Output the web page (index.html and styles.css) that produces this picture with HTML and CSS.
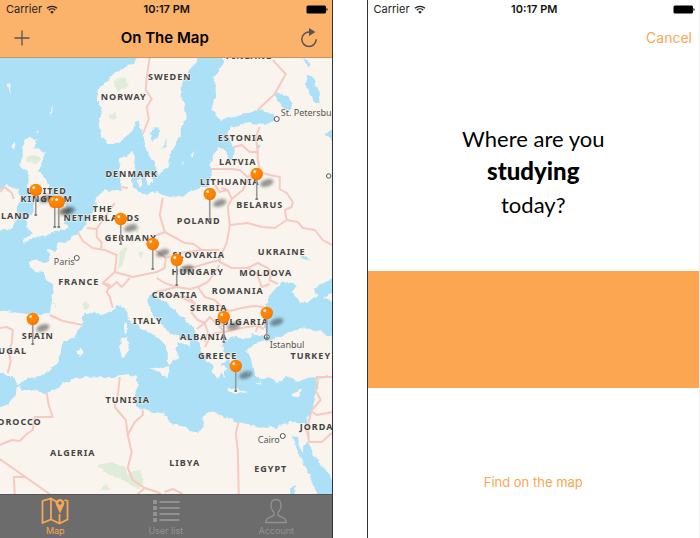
FILE: index.html
```html
<!DOCTYPE html>
<html lang="en">
<head>
<meta charset="utf-8">
<meta name="viewport" content="width=device-width, initial-scale=1">
<title>On The Map</title>
<link rel="stylesheet" href="styles.css">
</head>
<body>
<svg class="defs" aria-hidden="true">
  <symbol id="wifi" viewBox="0 0 12 9"><path d="M1 3.3a7.2 7.2 0 0 1 10 0M2.8 5.2a4.6 4.6 0 0 1 6.4 0" fill="none" stroke="currentColor" stroke-width="1.3"/><path d="M6 8.7 4.2 6.9a2.6 2.6 0 0 1 3.6 0z" fill="currentColor"/></symbol>
  <symbol id="battery" viewBox="0 0 22 9"><rect x=".5" y=".5" width="19.5" height="8" rx="1.5" fill="currentColor"/><path d="M20.5 3a1.6 1.6 0 0 1 0 3z" fill="currentColor"/></symbol>
</svg>
<div class="screens">
  <main class="phone phone-map">
    <header class="bar">
      <div class="status"><span class="carrier">Carrier <svg class="wifi"><use href="#wifi"/></svg></span><strong>10:17 PM</strong><svg class="battery"><use href="#battery"/></svg></div>
      <div class="title-row">
        <button class="icon-button" aria-label="Add location"><svg width="16" height="16" viewBox="0 0 16 16"><path d="M8 .5v15M.5 8h15" stroke="#555" stroke-width="1.3"/></svg></button>
        <h1>On The Map</h1>
        <button class="icon-button" aria-label="Refresh"><svg width="18" height="20" viewBox="0 0 18 20"><path d="M11.5 4.1H9A7.2 7.2 0 1 0 16.2 11.3" fill="none" stroke="#555" stroke-width="1.5"/><path d="M9 0 15.500 4.100 9 8z" fill="#555"/></svg></button>
      </div>
    </header>
    <svg class="map" viewBox="0 58 332 436" preserveAspectRatio="xMidYMid slice" role="img" aria-label="Map of Europe">
      <defs>
        <filter id="coast" x="-5%" y="-5%" width="110%" height="110%" color-interpolation-filters="sRGB"><feTurbulence type="fractalNoise" baseFrequency=".12" numOctaves="3" seed="4" result="n"/><feDisplacementMap in="SourceGraphic" in2="n" scale="6" xChannelSelector="R" yChannelSelector="G"/></filter>
        <filter id="soft" x="-50%" y="-50%" width="200%" height="200%"><feGaussianBlur stdDeviation="1.8"/></filter>
        <radialGradient id="ball" cx=".4" cy=".35" r=".7"><stop offset="0" stop-color="#ff8c0a"/><stop offset=".7" stop-color="#ff7f00"/><stop offset="1" stop-color="#ee7000"/></radialGradient>
        <g id="pin"><ellipse cx="10" cy="9" rx="7" ry="3.500" transform="rotate(-18 10 9)" fill="#333" opacity=".5" filter="url(#soft)"/><path d="M0 4v21" stroke="#999" stroke-width="1.600"/><ellipse cy="25" rx="1.600" ry="1.100" fill="#777"/><circle r="6.200" fill="url(#ball)"/><circle cx="-2" cy="-2.300" r="1.400" fill="#fff4df"/></g>
      </defs>
      <g class="land" filter="url(#coast)">
        <path d="M138 50V58L133 64 126 67 115 72 107 82 98 89 97 100 102 112 99 124 102 137 108 143 115 145 121 141 127 137 132 129 137 120 140 129 145 137 147 146 148 154 152 160 155 164 156 170 159 176 164 171 168 167 170 154 178 142 181 136 181 129 187 117 185 107 182 98 182 84 190 70 197 62 202 50Z"/>
        <path d="M224 50 223 62 215 77 216 91 213 104 215 115 223 119 233 117 242 115 252 111 259 110 273 114 277 120 265 125 253 123 242 124 232 127 228 135 233 144 235 150 234 157 230 159 227 157 224 150 219 148 215 154 211 160 211 180 209 187 202 187 192 190 182 197 173 196 165 195 157 191 147 194 138 193 133 187 132 177 135 167 136 157 133 152 125 156 119 161 119 172 121 181 122 190 115 190 106 191 100 194 97 200 95 206 91 214 89 220 86 226 80 230 76 236 72 237 70 241 60 243 56 251 48 249 50 260 45 262 40 260 28 262 29 266 32 268 37 271 43 272 46 279 52 283 53 297 50 313 43 315 34 315 20 313 0 310-9 310-9 373 5 373 9 378 13 378 18 384 21 383 27 377 40 376 47 372 55 365 60 360 60 352 63 343 77 334 83 325 82 317 87 313 92 313 103 315 109 312 115 308 119 305 125 308 128 316 133 323 141 329 150 333 157 337 162 343 166 348 168 352 168 361 171 365 175 360 180 357 177 352 175 347 180 342 185 345 190 347 190 343 180 338 170 332 167 328 163 325 154 315 150 307 148 297 155 292 159 299 167 303 180 315 193 327 198 340 203 353 207 360 213 367 213 373 217 378 221 374 225 378 224 371 228 370 224 365 220 363 228 360 234 365 232 358 225 353 223 343 227 340 233 338 247 338 253 334 260 336 270 336 263 327 266 307 270 293 276 288 282 282 290 282 298 288 293 293 297 297 300 302 307 303 312 300 318 295 314 290 320 285 328 281 342 277V50Z"/>
        <path d="M342 292 332 293 323 298 333 302 342 303ZM252 345 262 342 277 338 290 332 300 328 312 329 322 333 342 336V377H332L324 376 317 378 318 385 316 393 313 403 308 417 307 425 298 423 290 422 280 425 268 428 253 425 238 422 225 417 215 412 208 412 203 416 203 425 197 433 185 428 172 423 165 415 151 412 143 410 137 405 134 399 138 385 135 381 138 375 133 377 130 373 118 377 103 377 83 378 75 379 63 383 56 389 50 392 43 393 33 390 23 390 21 384 17 390 13 400 0 408-9 410V504H342V377 376L317 378 308 379 300 382 294 380 287 377 283 381 277 383 272 380 268 378 261 379 255 375 254 367 252 360 247 350Z"/>
        <path d="M25 139 31 138 38 139 36 145 33 149 40 150 47 152 44 161 40 169 37 172 43 174 47 180 50 190 55 200 62 202 68 208 67 216 65 223 68 226 60 231 53 233 43 236 34 238 22 243 25 237 33 233 25 228 28 223 27 217 34 212 33 203 32 193 27 187 29 180 28 172 20 167 22 157 22 150ZM-9 190H0L7 184 17 190 20 200 17 209 18 218 13 227-9 232ZM121 340 128 337 129 348 126 357 122 357 120 350ZM124 325 127 321 128 330 125 334ZM150 368 160 369 169 366 168 377 160 374ZM137 180 141 178 143 184 139 187ZM146 176 152 173 154 182 148 185ZM76 352 81 349 84 353 80 356ZM191 156 195 150 193 158ZM181 166 184 159 183 164ZM292 393 302 389 300 395 294 397ZM228 388 237 390 248 392 237 394 228 391ZM10 148 14 140 15 150ZM7 84 12 83 11 93ZM37 130 39 132 37 135ZM50 111 53 105 52 117ZM248 373 251 371 250 374ZM257 384 261 380 259 384Z"/>
      </g>
      <g class="water" filter="url(#coast)">
        <path d="M275 94 279 92 286 96 293 103 291 110 285 109 280 105ZM307 75 312 76 315 82 318 88 320 102 314 102 311 93 305 85ZM303 58 309 60 309 68ZM150 133 155 127 161 130 158 137 152 141ZM162 148 167 139 166 146ZM257 144 261 146 259 149ZM325 134 334 129V142ZM292 437 297 438 303 452 308 442 309 448 322 465 342 492V504H322L308 472 298 452ZM290 488 296 484 297 497H291ZM271 426 279 425 274 429ZM298 253 305 255 311 261 302 257Z"/>
      </g>
      <g class="green" filter="url(#coast)"><path d="M28 158 35 154 42 159 36 164 29 163ZM113 82 124 77 129 86 118 91ZM109 115 114 112 118 119 111 120ZM120 255 124 246 128 248 122 266 118 270ZM82 304 87 301 91 305 87 310ZM97 466 111 463 126 466 129 474 141 470 144 485 138 489 122 479 110 475ZM99 490 106 484 110 491ZM53 302 57 304 56 308ZM138 254 143 252 144 259ZM133 229 139 228 137 234Z"/></g>
      <g class="borders">
        <path d="M150 57 147 77 146 90 152 99 147 107 149 119 143 134M273 60 286 74 275 94 258 110M260 127 256 137 258 152 250 152 242 145 234 147M258 152V160L260 170 248 177 240 170 232 169H211M260 172 248 180 243 190 232 199 228 190 220 192 211 179M228 190 222 188M260 172 270 175 280 177V189L287 193 293 202 292 207 285 210 287 220 275 228 262 227 248 223 230 225M287 220 298 222 303 228 315 230 323 240 332 245M232 199 228 207 230 225 227 243 220 258 220 262 232 268 248 268 258 263 268 268 272 272 270 280 278 284M248 268 257 273 262 287 270 284M163 198 160 215 165 232 176 238 185 243 194 244 202 250H220M165 232 150 238 147 244 158 252 166 258 180 253 202 250M166 258 165 268 157 272 133 277 115 272M182 267 195 267 208 263 220 260M220 265 208 282 198 287 190 289 177 287 165 283 157 278M155 292 165 290 177 287M198 287 205 297 215 300 222 307 230 311 242 308 254 306 265 307M180 297 188 297 195 303 192 313 198 320 205 323 197 329M162 297 176 295 194 303M205 323 210 317 218 325 225 332 236 329 248 327 262 325M220 310 222 320 222 327M205 347 209 340 215 333 225 332M205 323 208 332 205 342M256 332 258 326 264 329M78 232 83 241 93 248 105 250 117 255 115 272 103 283 110 285 107 292 110 297 113 308M87 228 97 229 103 220 108 213 115 203M97 229 97 237 102 243 101 250M103 283 110 288 117 282 122 287 130 278M122 187 128 188M50 315 63 321 83 325M0 328 7 327 13 330 12 343 9 351 11 361 8 373M0 192 5 187 12 193 14 199M47 393 49 405 53 417H35L33 430 27 434 20 441 12 440 0 445M0 459 50 494M26 477H14L15 494M120 377 119 387 118 395 115 407 126 420 128 435 132 452 128 468 133 480 145 488 138 494M128 435 135 422 143 415 143 410M145 488 157 492 161 494M239 422 236 433 238 450 239 494M165 492 173 489 183 494M333 377H317L318 383 316 391 321 400 312 410 308 425 309 442 322 442 333 432M311 411 317 415 333 412M305 425 309 438"/>
      </g>
      <g class="cities"><circle cx="277" cy="119" r="2.500"/><circle cx="329" cy="176" r="2.200"/><circle cx="77" cy="258" r="2.500"/><circle cx="267" cy="337" r="2.500"/><circle cx="283" cy="436" r="2.500"/></g>
      <g class="city-names"><text x="281" y="116">St. Petersburg</text><text x="54" y="265">Paris</text><text x="270" y="348">Istanbul</text><text x="258" y="443">Cairo</text></g>
      <g class="countries">
        <text x="170" y="80">SWEDEN</text><text x="250" y="59">FINLAND</text><text x="124" y="100">NORWAY</text><text x="132" y="177">DENMARK</text><text x="241" y="141">ESTONIA</text><text x="238" y="165">LATVIA</text><text x="230" y="185">LITHUANIA</text><text x="260" y="208">BELARUS</text><text x="47" y="194">UNITED</text><text x="47" y="202">KINGDOM</text><text x="7" y="219">IRELAND</text><text x="103" y="212">THE</text><text x="102" y="221">NETHERLANDS</text><text x="131" y="241">GERMANY</text><text x="199" y="224">POLAND</text><text x="199" y="258">SLOVAKIA</text><text x="198" y="275">HUNGARY</text><text x="282" y="255">UKRAINE</text><text x="266" y="276">MOLDOVA</text><text x="238" y="294">ROMANIA</text><text x="175" y="298">CROATIA</text><text x="79" y="285">FRANCE</text><text x="209" y="311">SERBIA</text><text x="242" y="325">BULGARIA</text><text x="148" y="324">ITALY</text><text x="204" y="340">ALBANIA</text><text x="38" y="339">SPAIN</text><text x="218" y="359">GREECE</text><text x="311" y="359">TURKEY</text><text x="-1" y="354">PORTUGAL</text><text x="128" y="403">TUNISIA</text><text x="15" y="425">MOROCCO</text><text x="73" y="456">ALGERIA</text><text x="185" y="466">LIBYA</text><text x="271" y="472">EGYPT</text><text x="321" y="430">JORDAN</text>
      </g>
      <g><use href="#pin" x="257" y="174"/><use href="#pin" x="36" y="190"/><use href="#pin" x="210" y="194"/><use href="#pin" x="55" y="202"/><use href="#pin" x="59" y="202"/><use href="#pin" x="121" y="219"/><use href="#pin" x="153" y="244"/><use href="#pin" x="177" y="260"/><use href="#pin" x="267" y="313"/><use href="#pin" x="224" y="317"/><use href="#pin" x="33" y="319"/><use href="#pin" x="236" y="366"/></g>
    </svg>
    <nav class="tabs" aria-label="Sections">
      <a class="active" href="#map" aria-current="page"><svg width="28" height="28" viewBox="0 0 28 28" fill="none" stroke="currentColor" stroke-width="1.800"><path d="M16 5 10 1.500 1.500 4V26L10 22.500 18.500 26.500 26.500 22.500V4L23.500 3M10 1.500V22.500M18.500 17V26.500"/><path d="M19 16.500 15.200 8.200a4.300 4.300 0 1 1 7.600 0zM19 4.300a1.700 1.700 0 1 0 .01 0z" fill="currentColor" fill-rule="evenodd" stroke="none"/></svg>Map</a>
      <a href="#users"><svg width="28" height="28" viewBox="0 0 28 28" fill="currentColor"><path d="M1 3h4v4H1zM1 9h4v4H1zM1 15h4v4H1zM1 21h4v4H1zM7.500 4h20v2h-20zM7.500 10h20v2h-20zM7.500 16h20v2h-20zM7.500 22h20v2h-20z"/></svg>User list</a>
      <a href="#account"><svg width="28" height="28" viewBox="0 0 28 28" fill="none" stroke="currentColor" stroke-width="1.300"><path d="M14 2.500c-3.500 0-5 2.500-5 5.500 0 3.500 1.500 6 3 7.200v3C10 20 4 20 3.500 25.500h21C24 20 18 20 16 18.200v-3c1.500-1.200 3-3.700 3-7.200 0-3-1.500-5.500-5-5.500z"/></svg>Account</a>
    </nav>
  </main>
  <form class="phone phone-find">
    <div class="status"><span class="carrier">Carrier <svg class="wifi"><use href="#wifi"/></svg></span><strong>10:17 PM</strong><svg class="battery"><use href="#battery"/></svg></div>
    <div class="title-row end"><button type="button" class="text-button cancel">Cancel</button></div>
    <label class="question" for="place">Where are you<br><b>studying</b><br>today?</label>
    <textarea id="place" class="place"></textarea>
    <div class="actions"><button type="button" class="text-button">Find on the map</button></div>
  </form>
</div>
</body>
</html>
```
FILE: styles.css
```css
* { box-sizing: border-box; }
body { margin: 0; background: #fff; color: #000; font-family: Inter, "Liberation Sans", sans-serif; }
button { padding: 0; border: 0; background: none; font: inherit; }
.defs { position: absolute; width: 0; height: 0; }

.screens { display: flex; gap: 34px; min-height: 100vh; }
.phone { flex: 1 1 0; min-width: 0; }
.phone-map { display: flex; flex-direction: column; border-right: 1px solid #333; }
.phone-find { display: grid; grid-template-rows: auto auto 214fr 117fr 150fr; border-left: 1px solid #333; border-right: 1px solid #f0f0f0; }

.bar { background: #fbb36b; border-bottom: 1px solid #c99660; }
.status { display: grid; grid-template-columns: 1fr auto 1fr; align-items: center; height: 18px; padding: 0 4px 0 6px; font-size: 11px; color: #222; }
.status strong { font-weight: 600; color: #111; }
.carrier { display: flex; align-items: center; gap: 4px; }
.wifi { width: 12px; height: 9px; }
.battery { width: 22px; height: 9px; justify-self: end; color: #000; }
.title-row { display: flex; align-items: center; justify-content: space-between; height: 39px; padding: 0 14px; }
.title-row h1 { margin: 0; font-size: 15px; line-height: 20px; font-weight: 600; }
.icon-button { display: flex; }
.title-row.end { justify-content: flex-end; padding: 0 7px; }
.text-button { color: #fba651; font-size: 13px; line-height: 20px; }
.cancel { font-size: 14px; }

.map { flex: 1 1 0; min-height: 0; width: 100%; display: block; background: #abe0f6; }
.land { fill: #f9f5ee; }
.water { fill: #abe0f6; }
.green { fill: #e0ecda; }
.borders { fill: none; stroke: #f6c9c1; stroke-width: 2; stroke-linejoin: round; }
.cities { fill: #fff; stroke: #555; stroke-width: 1; }
.map text { paint-order: stroke; stroke: #f9f5ee; stroke-width: 1; }
.countries { font: 700 9px "Noto Sans", sans-serif; letter-spacing: 1px; text-anchor: middle; fill: #444; }
.city-names { font: 9px "Noto Sans", sans-serif; fill: #555; }

.tabs { display: grid; grid-template-columns: repeat(3, 1fr); height: 44px; background: #6c6c6c; border-top: 1px solid #555; }
.tabs a { display: flex; flex-direction: column; align-items: center; padding-top: 2px; color: #929292; font-size: 9px; line-height: 12px; text-decoration: none; }
.tabs .active { color: #fba651; }

.question { padding-top: 65px; text-align: center; font: 22px/33px Lato, sans-serif; }
.question b { font-size: 24px; line-height: 24px; font-weight: 900; }
.place { width: 100%; height: 100%; min-height: 0; border: 0; border-radius: 0; padding: 12px; resize: none; background: #fca651; font: inherit; text-align: center; }
.actions { display: flex; align-items: center; justify-content: center; padding-top: 38px; }
```
